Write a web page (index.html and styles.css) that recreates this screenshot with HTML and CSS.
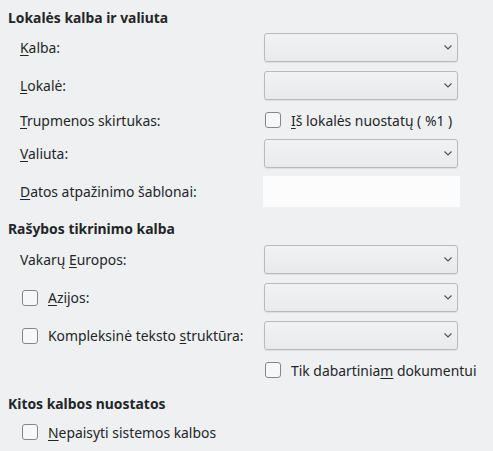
FILE: index.html
```html
<!DOCTYPE html>
<html lang="lt">
<head>
    <meta charset="UTF-8">
    <title>Kalbos nuostatos</title>
    <link rel="stylesheet" href="styles.css">
</head>
<body>
    <div class="page">
        <h3 class="section-title first">Lokalės kalba ir valiuta</h3>
        <div class="form">
            <div class="row r-kalba">
                <span class="label"><u>K</u>alba:</span>
                <div class="combo"><svg class="chev" width="8" height="5" viewBox="0 0 8 5"><path d="M0.5 0.5 L4 4 L7.5 0.5" /></svg></div>
            </div>
            <div class="row r-lokale">
                <span class="label"><u>L</u>okalė:</span>
                <div class="combo"><svg class="chev" width="8" height="5" viewBox="0 0 8 5"><path d="M0.5 0.5 L4 4 L7.5 0.5" /></svg></div>
            </div>
            <div class="row r-small r-trupm">
                <span class="label"><u>T</u>rupmenos skirtukas:</span>
                <label class="check"><span class="box"></span><span><u>I</u>š lokalės nuostatų ( %1 )</span></label>
            </div>
            <div class="row r-valiuta">
                <span class="label"><u>V</u>aliuta:</span>
                <div class="combo"><svg class="chev" width="8" height="5" viewBox="0 0 8 5"><path d="M0.5 0.5 L4 4 L7.5 0.5" /></svg></div>
            </div>
            <div class="row r-datos">
                <span class="label"><u>D</u>atos atpažinimo šablonai:</span>
                <div class="field"></div>
            </div>
        </div>

        <h3 class="section-title second">Rašybos tikrinimo kalba</h3>
        <div class="form">
            <div class="row r-vakaru">
                <span class="label">Vakarų <u>E</u>uropos:</span>
                <div class="combo"><svg class="chev" width="8" height="5" viewBox="0 0 8 5"><path d="M0.5 0.5 L4 4 L7.5 0.5" /></svg></div>
            </div>
            <div class="row r-azijos">
                <label class="check left"><span class="box"></span><span><u>A</u>zijos:</span></label>
                <div class="combo"><svg class="chev" width="8" height="5" viewBox="0 0 8 5"><path d="M0.5 0.5 L4 4 L7.5 0.5" /></svg></div>
            </div>
            <div class="row r-kompl">
                <label class="check left"><span class="box"></span><span>Kompleksinė teksto <u>s</u>truktūra:</span></label>
                <div class="combo"><svg class="chev" width="8" height="5" viewBox="0 0 8 5"><path d="M0.5 0.5 L4 4 L7.5 0.5" /></svg></div>
            </div>
            <div class="row r-small r-tik">
                <span></span>
                <label class="check"><span class="box"></span><span>Tik dabartinia<u>m</u> dokumentui</span></label>
            </div>
        </div>

        <h3 class="section-title third">Kitos kalbos nuostatos</h3>
        <div class="form">
            <div class="row r-small r-nepaisyti">
                <label class="check left"><span class="box"></span><span><u>N</u>epaisyti sistemos kalbos</span></label>
            </div>
        </div>
    </div>
</body>
</html>
```

FILE: styles.css
```css
* {
    margin: 0;
    padding: 0;
    box-sizing: border-box;
}
html, body {
    width: 493px;
    height: 451px;
    overflow: hidden;
}
body {
    background-color: #eff0f1;
    color: #232629;
    font-family: "Noto Sans", sans-serif;
    font-size: 13.9px;
}
.page {
    padding-top: 8px;
}
.section-title {
    font-size: 13.9px;
    font-weight: bold;
    height: 20px;
    line-height: 20px;
    padding-left: 8px;
}
.section-title.second {
    margin-top: 12px;
}
.section-title.third {
    margin-top: 13px;
}
.form {
    padding-left: 20px;
}
.row {
    display: grid;
    grid-template-columns: 244px 194px;
    align-items: center;
    height: 29px;
    margin-top: 9px;
}
.r-kalba {
    margin-top: 5px;
}
.r-vakaru {
    margin-top: 6px;
}
.r-small {
    height: 22px;
}
.r-valiuta, .r-datos {
    margin-top: 8px;
}
.r-datos {
    height: 31px;
    grid-template-columns: 243px 197px;
}
.r-nepaisyti {
    margin-top: 7px;
}
.label {
    white-space: nowrap;
}
u {
    text-decoration-thickness: 1px;
    text-underline-offset: 2px;
}
.combo {
    height: 29px;
    border: 1px solid #b9babb;
    border-radius: 3px;
    background: linear-gradient(#f1f2f3, #e9eaeb);
    box-shadow: 0 1px 1px rgba(0, 0, 0, 0.08);
    display: flex;
    align-items: center;
    justify-content: flex-end;
    padding-right: 5px;
}
.chev {
    fill: none;
    stroke: #4d4f52;
    stroke-width: 1.1;
}
.field {
    height: 31px;
    background-color: #fcfcfc;
}
.check {
    display: flex;
    align-items: center;
    gap: 10px;
    white-space: nowrap;
    padding-left: 1px;
}
.check.left {
    padding-left: 2px;
}
.box {
    width: 16px;
    height: 16px;
    border: 1px solid #84878a;
    border-radius: 3px;
    background-color: #f7f7f7;
    flex: none;
}
```
